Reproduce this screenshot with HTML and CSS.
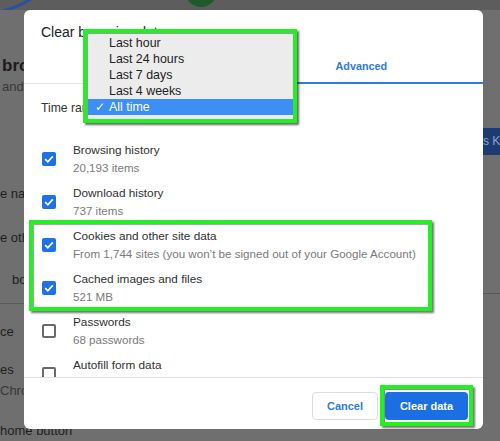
FILE: index.html
```html
<!DOCTYPE html>
<html>
<head>
<meta charset="utf-8">
<link rel="stylesheet" href="styles.css">
</head>
<body>
<div class="page">
  <div class="topbar">
    <svg class="arc" width="40" height="16" viewBox="0 0 40 16"><path d="M-2 14 Q15 11 31 1" stroke="#2d4f9e" stroke-width="3" fill="none"/></svg>
    <span class="avatar"></span>
  </div>
  <div class="bg-main">
    <div class="bg-left">
      <div class="bg-h">browser</div>
      <div class="bg-sub bg-b">and privacy</div>
      <div class="bg-item bg-c">e names</div>
      <div class="bg-item bg-d">e other</div>
      <div class="bg-item bg-e">bookmarks</div>
      <div class="bg-rule"></div>
      <div class="bg-item bg-f">ce</div>
      <div class="bg-item bg-g">es</div>
      <div class="bg-sub bg-hh">Chrome</div>
      <div class="bg-item bg-i">home button</div>
    </div>
    <div class="bg-right">
      <div class="bg-btn">s K</div>
      <div class="bg-rule2"></div>
    </div>
  </div>
</div>

<div class="dialog">
  <div class="dlg-title">Clear browsing data</div>
  <div class="tabs">
    <div class="tab">Basic</div>
    <div class="tab active">Advanced</div>
  </div>
  <div class="time-row">Time range</div>
  <div class="list">
    <div class="row">
      <span class="cb on"><svg width="14" height="14" viewBox="0 0 14 14"><path d="M3.2 7.2 L5.8 9.8 L10.8 4.4" stroke="#fff" stroke-width="1.8" fill="none"/></svg></span>
      <div class="txt"><div class="t1">Browsing history</div><div class="t2">20,193 items</div></div>
    </div>
    <div class="row">
      <span class="cb on"><svg width="14" height="14" viewBox="0 0 14 14"><path d="M3.2 7.2 L5.8 9.8 L10.8 4.4" stroke="#fff" stroke-width="1.8" fill="none"/></svg></span>
      <div class="txt"><div class="t1">Download history</div><div class="t2">737 items</div></div>
    </div>
    <div class="highlight">
      <div class="row">
        <span class="cb on"><svg width="14" height="14" viewBox="0 0 14 14"><path d="M3.2 7.2 L5.8 9.8 L10.8 4.4" stroke="#fff" stroke-width="1.8" fill="none"/></svg></span>
        <div class="txt"><div class="t1">Cookies and other site data</div><div class="t2">From 1,744 sites (you won’t be signed out of your Google Account)</div></div>
      </div>
      <div class="row">
        <span class="cb on"><svg width="14" height="14" viewBox="0 0 14 14"><path d="M3.2 7.2 L5.8 9.8 L10.8 4.4" stroke="#fff" stroke-width="1.8" fill="none"/></svg></span>
        <div class="txt"><div class="t1">Cached images and files</div><div class="t2">521 MB</div></div>
      </div>
    </div>
    <div class="row">
      <span class="cb"></span>
      <div class="txt"><div class="t1">Passwords</div><div class="t2">68 passwords</div></div>
    </div>
    <div class="row">
      <span class="cb"></span>
      <div class="txt"><div class="t1">Autofill form data</div><div class="t2 blank"></div></div>
    </div>
  </div>
  <div class="footer">
    <button class="btn cancel">Cancel</button>
    <div class="cta-wrap"><button class="btn primary">Clear data</button></div>
  </div>

  <div class="popup">
    <div class="menu">
      <div class="mi"><span class="chk"></span><span>Last hour</span></div>
      <div class="mi"><span class="chk"></span><span>Last 24 hours</span></div>
      <div class="mi"><span class="chk"></span><span>Last 7 days</span></div>
      <div class="mi"><span class="chk"></span><span>Last 4 weeks</span></div>
      <div class="mi sel"><span class="chk">✓</span><span>All time</span></div>
    </div>
  </div>
</div>
</body>
</html>
```

FILE: styles.css
```css
html, body {
  margin: 0;
  padding: 0;
}
body {
  width: 500px;
  height: 441px;
  overflow: hidden;
  background: #6f6f6f;
  font-family: "Liberation Sans", Arial, sans-serif;
  position: relative;
}
.page {
  display: flex;
  flex-direction: column;
  height: 441px;
}
.topbar {
  height: 10px;
  background: #5d5d5d;
  position: relative;
  overflow: hidden;
  flex: none;
}
.arc {
  position: absolute;
  left: 0;
  top: -2px;
}
.avatar {
  position: absolute;
  left: 185px;
  top: -25px;
  width: 32px;
  height: 32px;
  border-radius: 50%;
  background: #1f5a2b;
}
.bg-main {
  flex: 1;
  display: flex;
  justify-content: space-between;
}
.bg-left {
  width: 120px;
  display: flex;
  flex-direction: column;
  color: #1e1e1e;
  font-size: 13px;
  white-space: nowrap;
}
.bg-h {
  margin-top: 46px;
  height: 20px;
  line-height: 20px;
  font-size: 17px;
  font-weight: bold;
  padding-left: 2px;
  color: #1c1c1c;
}
.bg-sub {
  color: #383838;
  height: 18px;
  line-height: 18px;
  font-size: 13px;
}
.bg-item {
  height: 18px;
  line-height: 18px;
}
.bg-b { margin-top: 2px; padding-left: 2px; }
.bg-c { margin-top: 89px; }
.bg-d { margin-top: 26px; }
.bg-e { margin-top: 24px; padding-left: 12px; }
.bg-rule {
  margin-top: 14px;
  height: 1px;
  background: #5a5a5a;
}
.bg-f { margin-top: 19px; }
.bg-g { margin-top: 20px; }
.bg-hh { margin-top: 3px; }
.bg-i { margin-top: 22px; }
.bg-right {
  width: 17px;
  display: flex;
  flex-direction: column;
}
.bg-btn {
  margin-top: 118px;
  height: 27px;
  line-height: 27px;
  background: #1c3b72;
  color: #8fa3c8;
  font-size: 12px;
  white-space: nowrap;
  overflow: hidden;
}
.bg-rule2 {
  margin-top: 138px;
  height: 1px;
  background: #575757;
}

/* dialog */
.dialog {
  position: absolute;
  left: 24px;
  top: 10px;
  width: 459px;
  height: 419px;
  background: #fff;
  border-radius: 6px;
  display: flex;
  flex-direction: column;
}
.dlg-title {
  padding: 12px 17px 0;
  height: 19px;
  line-height: 20px;
  font-size: 14px;
  color: #202124;
}
.tabs {
  margin-top: 7px;
  height: 36px;
  box-sizing: border-box;
  display: grid;
  grid-template-columns: 47% 53%;
  border-bottom: 1px solid #e2e2e2;
}
.tab {
  display: flex;
  align-items: center;
  justify-content: center;
  font-size: 10.8px;
  font-weight: bold;
  color: #5f6368;
  position: relative;
}
.tab.active {
  color: #2f7be0;
}
.tab.active::after {
  content: "";
  position: absolute;
  left: 0;
  right: 0;
  bottom: -1px;
  height: 2px;
  background: #2f7be0;
}
.time-row {
  height: 48px;
  display: flex;
  align-items: center;
  padding-left: 17px;
  font-size: 12.2px;
  color: #333;
}
.list {
  height: 239px;
  overflow: hidden;
  padding-top: 5.5px;
  border-bottom: 1px solid #e2e2e2;
  flex: none;
}
.row {
  height: 43px;
  display: flex;
  align-items: center;
  padding-left: 18px;
  gap: 17px;
}
.cb {
  width: 14px;
  height: 14px;
  box-sizing: border-box;
  border: 2px solid #6a6a6a;
  border-radius: 2px;
  flex: none;
  display: flex;
  align-items: center;
  justify-content: center;
}
.cb.on {
  border: none;
  background: #1d72e8;
}
.txt {
  display: flex;
  flex-direction: column;
}
.t1 {
  line-height: 18px;
  font-size: 11.8px;
  color: #303030;
}
.t2 {
  line-height: 18px;
  font-size: 11.6px;
  color: #7a7a7a;
}
.t2.blank {
  height: 18px;
}
.highlight {
  position: relative;
}
.highlight::after {
  content: "";
  position: absolute;
  left: 5px;
  right: 51px;
  top: -4px;
  bottom: -1px;
  border: 4px solid #22f022;
  box-shadow: 2px 2px 2px rgba(0,0,0,0.55), inset 1px 1px 0 rgba(0,0,0,0.35);
}
.footer {
  flex: 1;
  display: flex;
  justify-content: flex-end;
  align-items: flex-start;
  padding: 14px 15px 0;
  gap: 7px;
}
.btn {
  height: 28px;
  border-radius: 4px;
  font-family: "Liberation Sans", Arial, sans-serif;
  font-size: 11px;
  font-weight: bold;
  padding: 0;
  cursor: pointer;
}
.cancel {
  width: 66px;
  background: #fff;
  border: 1px solid #dadce0;
  color: #2f7be0;
}
.cta-wrap {
  position: relative;
}
.primary {
  width: 83px;
  background: #1c6fe3;
  border: none;
  color: #fff;
  display: block;
}
.cta-wrap::after {
  content: "";
  position: absolute;
  left: -5px;
  right: -5px;
  top: -7px;
  bottom: -6px;
  border: 4px solid #22f022;
  box-shadow: 2px 2px 2px rgba(0,0,0,0.55), inset 1px 1px 0 rgba(0,0,0,0.45);
  pointer-events: none;
}

/* native popup menu */
.popup {
  position: absolute;
  left: 59px;
  top: 19px;
  width: 214px;
  height: 94px;
  box-sizing: border-box;
  border: 4px solid #22f022;
  box-shadow: 2px 2px 2px rgba(0,0,0,0.6);
}
.menu {
  height: 100%;
  box-sizing: border-box;
  background: #ececec;
  border-top: 1px solid #9a9a9a;
  border-left: 1px solid #9a9a9a;
  padding-top: 1px;
}
.mi {
  height: 16px;
  line-height: 16px;
  display: flex;
  font-size: 12.4px;
  color: #222;
}
.mi.sel {
  background: #3d8ef5;
  color: #fff;
}
.chk {
  width: 14px;
  padding-left: 7px;
  flex: none;
  font-family: "DejaVu Sans", sans-serif;
  font-size: 12px;
  font-weight: bold;
}
```
